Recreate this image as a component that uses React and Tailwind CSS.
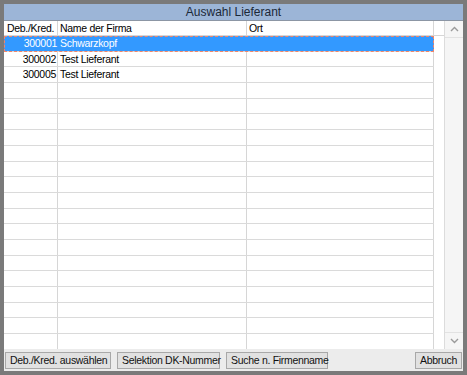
import React from "react";

const rows = [
  { nr: "300001", name: "Schwarzkopf", ort: "", sel: true },
  { nr: "300002", name: "Test Lieferant", ort: "" },
  { nr: "300005", name: "Test Lieferant", ort: "" },
];
const all = [...rows, ...Array.from({ length: 18 }, () => ({ nr: "", name: "", ort: "" }))];

function Btn({ children, className = "" }) {
  return (
    <div
      className={
        "h-[17px] px-[4px] flex items-center bg-[#e1e1e1] border border-[#a8a8a8] text-[10.5px] tracking-[-0.3px] text-[#111] leading-none whitespace-nowrap " +
        className
      }
    >
      {children}
    </div>
  );
}

export default function App() {
  return (
    <div className="w-[467px] h-[375px] bg-[#7a7a7a] px-[4px] pt-[4px] pb-[4px] flex flex-col font-['Liberation_Sans',Arial,sans-serif] text-[10.5px] tracking-[-0.3px] text-black overflow-hidden">
      <div className="h-[17px] shrink-0 bg-[#9cb5d7] border-b border-[#8c96a4] flex items-center justify-center text-[12px] tracking-normal text-[#1b2838]">
        Auswahl Lieferant
      </div>
      <div className="h-[328px] shrink-0 flex bg-white">
        <div className="w-[440px] flex flex-col overflow-hidden">
          <div className="h-[15px] shrink-0 flex border-b border-[#d6d6d6] leading-[14px]">
            <div className="w-[54px] pl-[3px] border-r border-[#d6d6d6] whitespace-nowrap overflow-hidden">Deb./Kred.</div>
            <div className="w-[189px] pl-[2px] border-r border-[#d6d6d6]">Name der Firma</div>
            <div className="w-[187px] pl-[2px] border-r border-[#d6d6d6]">Ort</div>
            <div className="flex-1"></div>
          </div>
          {all.map((r, i) => (
            <div key={i} className="h-[15.7px] shrink-0 flex leading-[14px]">
              <div
                className={
                  "w-[430px] flex border-b border-[#dadada] " +
                  (r.sel
                    ? "bg-[#3399ff] text-white outline-1 outline-dashed outline-[#f2856a] -outline-offset-1"
                    : "")
                }
              >
                <div className={"w-[54px] pr-[1px] text-right " + (r.sel ? "" : "border-r border-[#d6d6d6]")}>{r.nr}</div>
                <div className={"w-[189px] pl-[2px] " + (r.sel ? "" : "border-r border-[#d6d6d6]")}>{r.name}</div>
                <div className={"w-[187px] pl-[2px] " + (r.sel ? "" : "border-r border-[#d6d6d6]")}>{r.ort}</div>
              </div>
              <div className="flex-1"></div>
            </div>
          ))}
        </div>
        <div className="w-[19px] flex flex-col justify-between bg-[#f5f5f5] border-l border-[#dcdcdc]">
          <div className="h-[17px] flex items-center justify-center border-b border-[#e2e2e2]">
            <svg width="9" height="6" viewBox="0 0 9 6">
              <path d="M1 5 L4.5 1.5 L8 5" fill="none" stroke="#9a9a9a" strokeWidth="1.4" />
            </svg>
          </div>
          <div className="h-[17px] flex items-center justify-center border-t border-[#e2e2e2]">
            <svg width="9" height="6" viewBox="0 0 9 6">
              <path d="M1 1 L4.5 4.5 L8 1" fill="none" stroke="#9a9a9a" strokeWidth="1.4" />
            </svg>
          </div>
        </div>
      </div>
      <div className="flex-1 bg-[#ececec] flex items-center pl-[1px] pr-[1px] gap-[6px]">
        <Btn className="w-[106px]">Deb./Kred. auswählen</Btn>
        <Btn className="w-[103px]">Selektion DK-Nummer</Btn>
        <Btn className="w-[102px]">Suche n. Firmenname</Btn>
        <div className="flex-1"></div>
        <Btn className="w-[47px] justify-center px-0">Abbruch</Btn>
      </div>
    </div>
  );
}
